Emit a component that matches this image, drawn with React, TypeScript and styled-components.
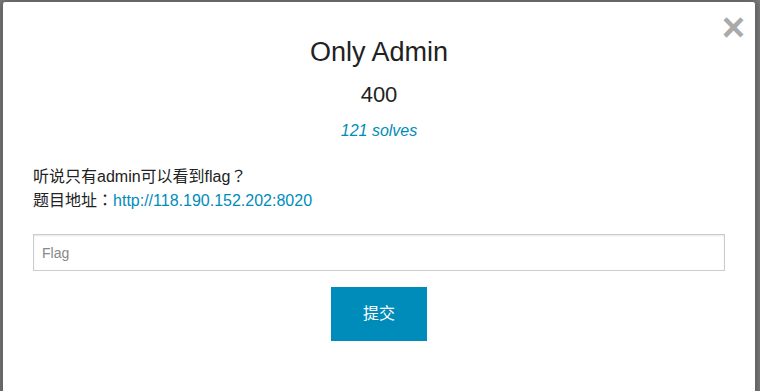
import React from 'react';
import styled, { createGlobalStyle } from 'styled-components';

const GlobalStyle = createGlobalStyle`
  html, body {
    margin: 0;
    padding: 0;
    height: 100%;
    overflow: hidden;
    background: #7d7d7d;
  }
  body {
    font-family: "Liberation Sans", "Noto Sans CJK SC", sans-serif;
    color: #222;
  }
`;

const Backdrop = styled.div`
  display: flex;
  padding: 1px 0 0 2px;
  height: 100vh;
  box-sizing: border-box;
`;

const Modal = styled.div`
  position: relative;
  width: 754px;
  min-height: 420px;
  box-sizing: border-box;
  background: #fff;
  border: 1px solid #666;
  border-radius: 3px;
  box-shadow: 0 0 10px rgba(0, 0, 0, 0.4);
  padding: 34px 30px 30px;
  display: flex;
  flex-direction: column;
`;

const Close = styled.a`
  position: absolute;
  top: 5px;
  right: 10px;
  font-size: 40px;
  line-height: 1;
  font-weight: bold;
  color: #aaa;
  cursor: pointer;
  text-decoration: none;
`;

const Title = styled.h3`
  margin: 0;
  text-align: center;
  font-size: 27px;
  line-height: 32px;
  font-weight: normal;
  color: #222;
`;

const Points = styled.h4`
  margin: 13px 0 0;
  text-align: center;
  font-size: 22px;
  line-height: 28px;
  font-weight: normal;
  color: #222;
`;

const Solves = styled.p`
  margin: 12px 0 0;
  text-align: center;
  font-size: 16px;
  line-height: 20px;
  font-style: italic;
  color: #008cba;
`;

const Description = styled.div`
  margin-top: 24px;
  font-size: 16px;
  line-height: 24px;
`;

// full-width punctuation sits centred in its cell, as in the traditional cut
const Punct = styled.span`
  font-family: "Noto Sans CJK TC", "Noto Sans CJK SC", sans-serif;
  line-height: 1;
`;

const Link = styled.a`
  color: #008cba;
  text-decoration: none;
`;

const FlagInput = styled.input`
  margin-top: 21px;
  height: 37px;
  box-sizing: border-box;
  width: 100%;
  border: 1px solid #ccc;
  padding: 8px;
  font-family: inherit;
  font-size: 14px;
  color: #222;
  box-shadow: inset 0 1px 2px rgba(0, 0, 0, 0.1);
  outline: none;
  &::placeholder {
    color: #888;
  }
`;

const Actions = styled.div`
  display: flex;
  justify-content: center;
  margin-top: 16px;
`;

const SubmitButton = styled.button`
  background: #008cba;
  color: #fff;
  border: none;
  font-family: inherit;
  font-size: 16px;
  line-height: 21px;
  padding: 16px 32px 17px;
  cursor: pointer;
`;

export default function App() {
  return (
    <>
      <GlobalStyle />
      <Backdrop>
        <Modal>
          <Close>×</Close>
          <Title>Only Admin</Title>
          <Points>400</Points>
          <Solves>121 solves</Solves>
          <Description>
            听说只有admin可以看到flag<Punct>？</Punct>
            <br />
            题目地址<Punct>：</Punct><Link href="#">http://118.190.152.202:8020</Link>
          </Description>
          <FlagInput placeholder="Flag" />
          <Actions>
            <SubmitButton>提交</SubmitButton>
          </Actions>
        </Modal>
      </Backdrop>
    </>
  );
}
